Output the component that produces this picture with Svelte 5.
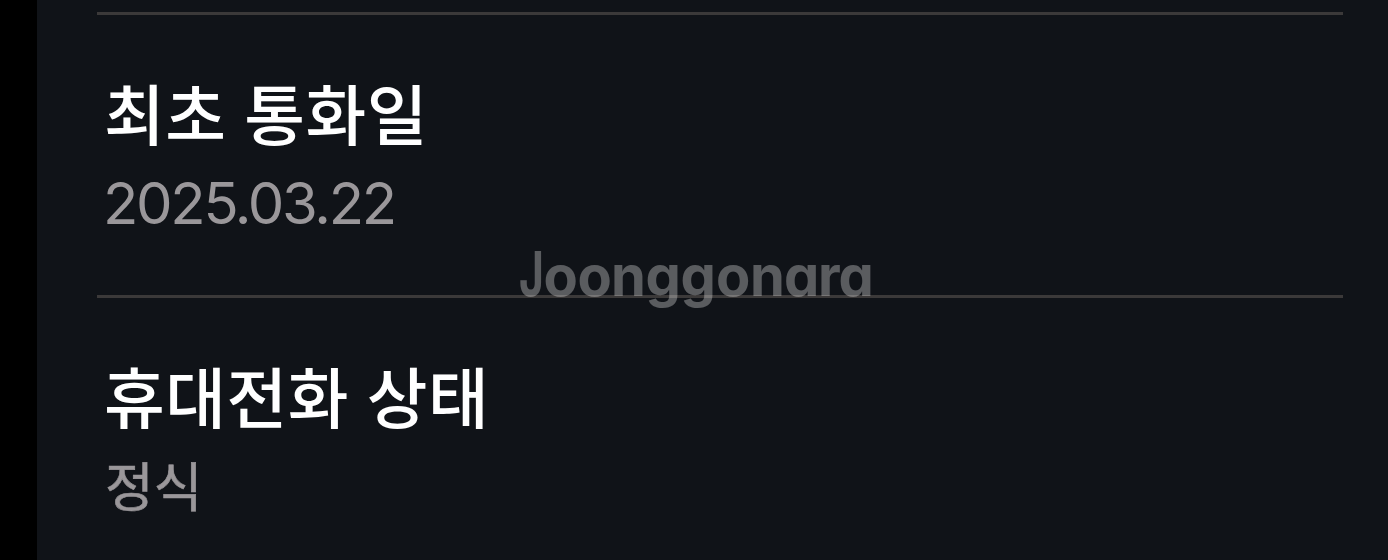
<script>
	const rows = [
		{ title: '최초 통화일', value: '2025.03.22', numeric: true },
		{ title: '휴대전화 상태', value: '정식' }
	];
</script>

<div class="screen">
	<div class="list">
		{#each rows as row}
			<section>
				<h2>{row.title}</h2>
				<p class:numeric={row.numeric}>{row.value}</p>
			</section>
		{/each}
	</div>
	<svg class="watermark" viewBox="0 0 380 90" aria-hidden="true">
		<text transform="translate(-1 56) scale(0.76 1.1)">J</text>
		<text x="23.5 57.5 91 125.5 160.5 196 230 264 298 318.5" y="56">oonggonara</text>
	</svg>
</div>

<style>
	:global(body) {
		margin: 0;
		background: #000;
	}
	.screen {
		position: relative;
		box-sizing: border-box;
		height: 560px;
		margin-left: 37px;
		padding: 12px 45px 0 60px;
		overflow: hidden;
		background: #101318;
	}
	section {
		box-sizing: border-box;
		height: 283px;
		padding: 56px 0 0 7px;
		border-top: 3px solid #3b3939;
	}
	h2 {
		margin: 0;
		font: 500 66px/80px 'Noto Sans CJK KR', sans-serif;
		letter-spacing: 0.5px;
		word-spacing: 2.5px;
		white-space: nowrap;
		color: #fff;
	}
	p {
		margin: 20px 0 0 1px;
		font: 400 53px/60px 'Noto Sans CJK KR', sans-serif;
		color: #9a979a;
		-webkit-text-stroke: 0.6px #9a979a;
	}
	.numeric {
		margin: 22px 0 0 -1px;
		font-family: Inter, sans-serif;
		font-size: 58px;
		letter-spacing: -2.3px;
		-webkit-text-stroke: 0;
	}
	.watermark {
		position: absolute;
		left: 483px;
		top: 240px;
		width: 380px;
		height: 90px;
		overflow: visible;
	}
	.watermark text {
		font: 700 56px Inter, sans-serif;
		font-feature-settings: 'cv11';
		fill: #fff;
		fill-opacity: 0.31;
	}
</style>
